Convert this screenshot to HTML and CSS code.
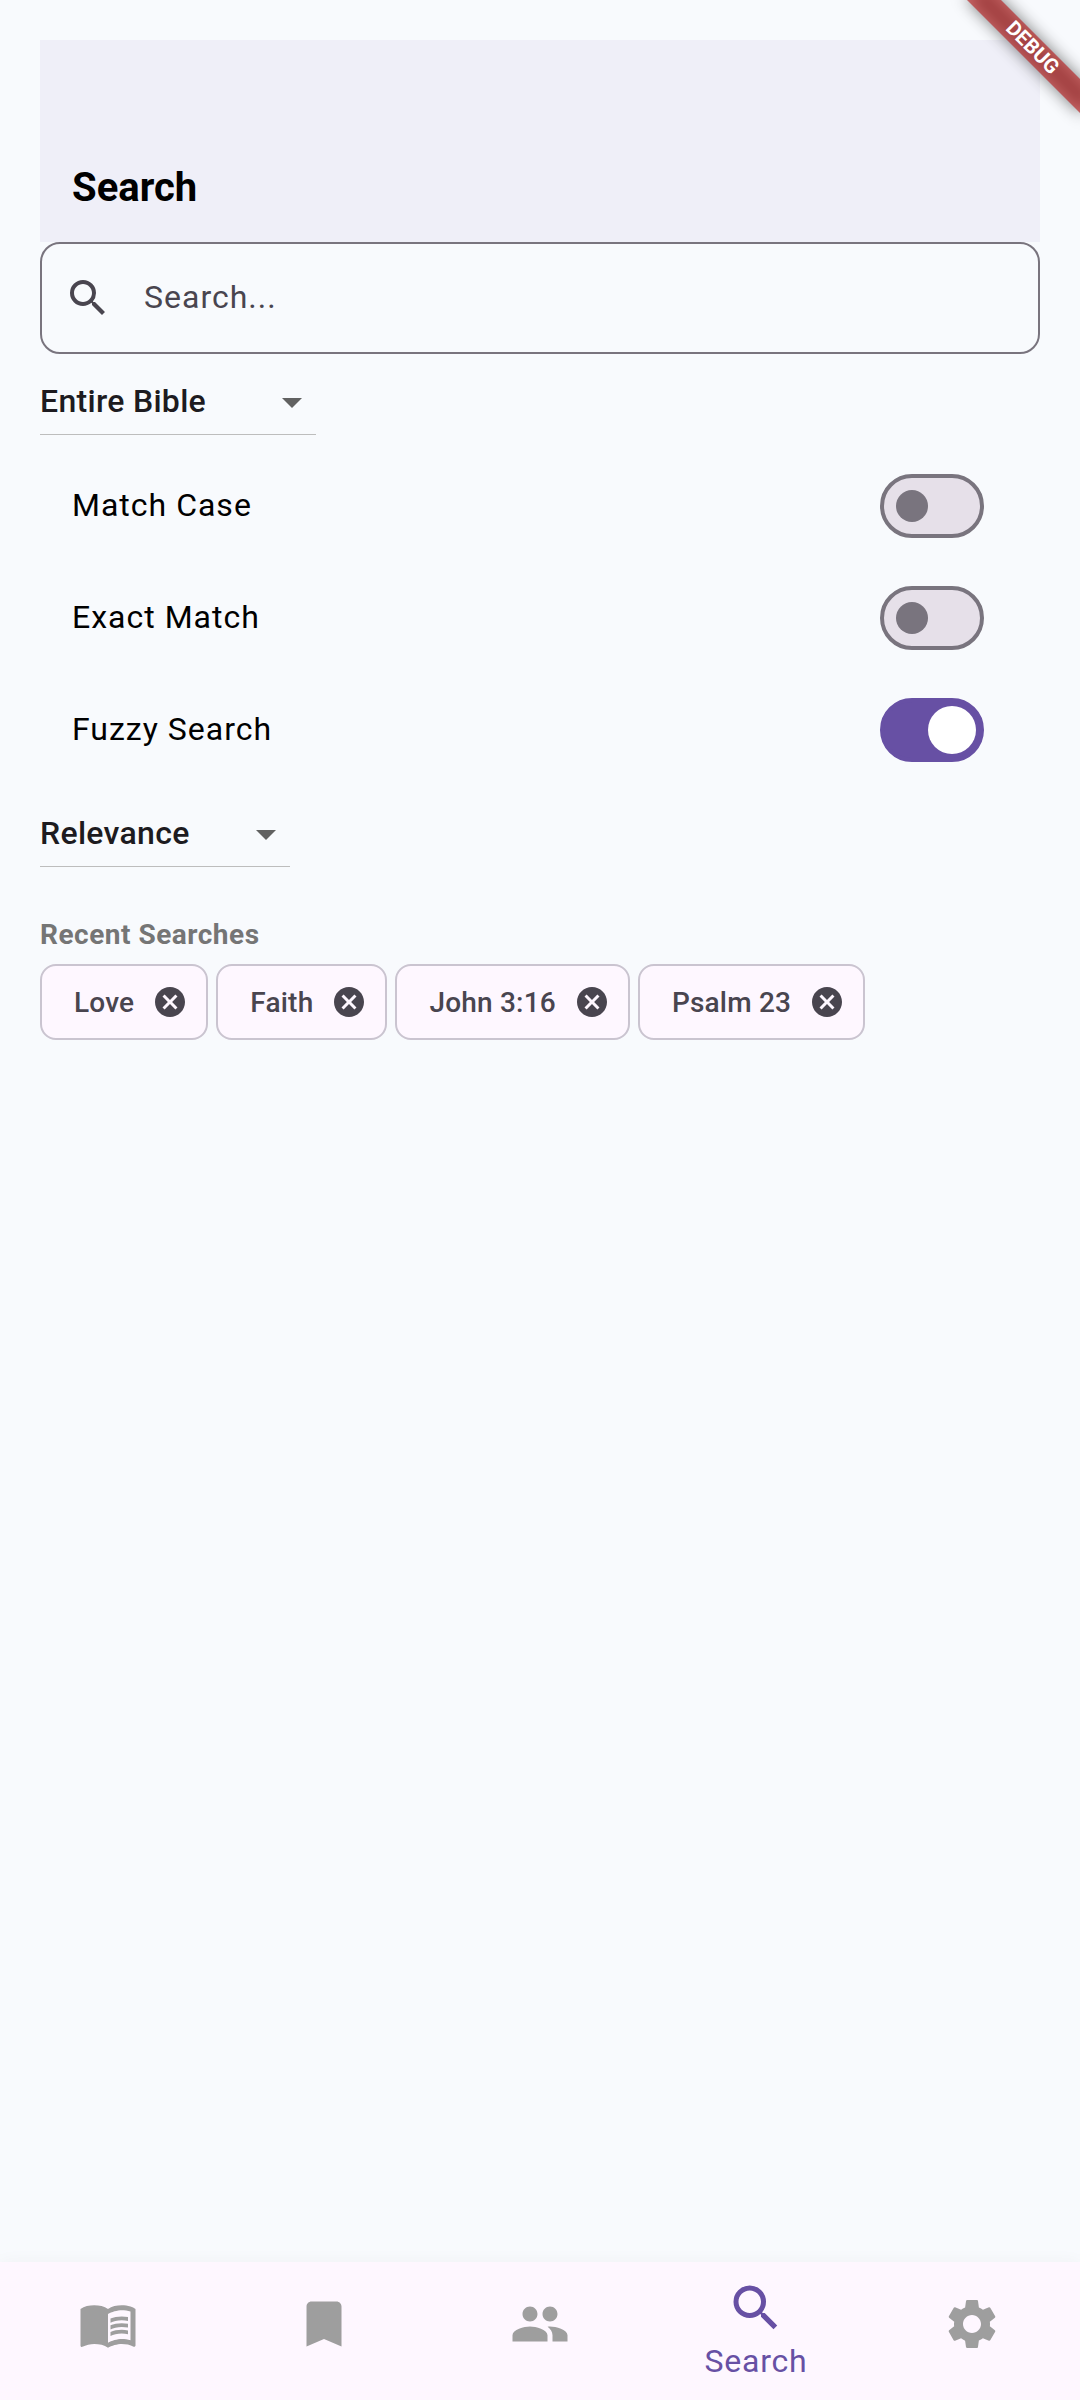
FILE: index.html
```
<!DOCTYPE html>
<html lang="en">
<head>
    <meta charset="UTF-8">
    <meta name="viewport" content="width=device-width, initial-scale=1.0">
    <title>Search</title>
    <link rel="stylesheet" href="styles.css">
</head>
<body>
    <div class="debug-corner">
        <div class="debug-banner"><span>DEBUG</span></div>
    </div>

    <main class="content">
        <header class="header">
            <h1>Search</h1>
        </header>

        <div class="search-field">
            <svg class="search-icon" viewBox="0 0 24 24"><path d="M15.5 14h-.79l-.28-.27A6.471 6.471 0 0 0 16 9.5 6.5 6.5 0 1 0 9.5 16c1.61 0 3.09-.59 4.23-1.57l.27.28v.79l5 4.99L20.49 19l-4.99-5zm-6 0C7.01 14 5 11.99 5 9.5S7.01 5 9.5 5 14 7.01 14 9.5 11.99 14 9.5 14z"/></svg>
            <span>Search...</span>
        </div>

        <div class="dropdown scope">
            <div class="dropdown-inner">
                <span>Entire Bible</span>
                <svg viewBox="0 0 24 24"><path d="M7 10l5 5 5-5z"/></svg>
            </div>
        </div>

        <div class="option">
            <span>Match Case</span>
            <div class="switch"><div class="thumb"></div></div>
        </div>
        <div class="option">
            <span>Exact Match</span>
            <div class="switch"><div class="thumb"></div></div>
        </div>
        <div class="option">
            <span>Fuzzy Search</span>
            <div class="switch on"><div class="thumb"></div></div>
        </div>

        <div class="dropdown sort">
            <div class="dropdown-inner">
                <span>Relevance</span>
                <svg viewBox="0 0 24 24"><path d="M7 10l5 5 5-5z"/></svg>
            </div>
        </div>

        <h2>Recent Searches</h2>
        <div class="chips">
            <div class="chip">
                <span>Love</span>
                <svg viewBox="0 0 24 24"><path d="M12 2C6.47 2 2 6.47 2 12s4.47 10 10 10 10-4.47 10-10S17.53 2 12 2zm5 13.59L15.59 17 12 13.41 8.41 17 7 15.59 10.59 12 7 8.41 8.41 7 12 10.59 15.59 7 17 8.41 13.41 12 17 15.59z"/></svg>
            </div>
            <div class="chip">
                <span>Faith</span>
                <svg viewBox="0 0 24 24"><path d="M12 2C6.47 2 2 6.47 2 12s4.47 10 10 10 10-4.47 10-10S17.53 2 12 2zm5 13.59L15.59 17 12 13.41 8.41 17 7 15.59 10.59 12 7 8.41 8.41 7 12 10.59 15.59 7 17 8.41 13.41 12 17 15.59z"/></svg>
            </div>
            <div class="chip">
                <span>John 3:16</span>
                <svg viewBox="0 0 24 24"><path d="M12 2C6.47 2 2 6.47 2 12s4.47 10 10 10 10-4.47 10-10S17.53 2 12 2zm5 13.59L15.59 17 12 13.41 8.41 17 7 15.59 10.59 12 7 8.41 8.41 7 12 10.59 15.59 7 17 8.41 13.41 12 17 15.59z"/></svg>
            </div>
            <div class="chip">
                <span>Psalm 23</span>
                <svg viewBox="0 0 24 24"><path d="M12 2C6.47 2 2 6.47 2 12s4.47 10 10 10 10-4.47 10-10S17.53 2 12 2zm5 13.59L15.59 17 12 13.41 8.41 17 7 15.59 10.59 12 7 8.41 8.41 7 12 10.59 15.59 7 17 8.41 13.41 12 17 15.59z"/></svg>
            </div>
        </div>
    </main>

    <nav class="bottom-nav">
        <a class="nav-item">
            <svg viewBox="0 0 24 24"><path d="M21 5c-1.11-.35-2.33-.5-3.5-.5-1.95 0-4.05.4-5.5 1.5-1.45-1.1-3.55-1.5-5.5-1.5S2.45 4.9 1 6v14.65c0 .25.25.5.5.5.1 0 .15-.05.25-.05C3.1 20.45 5.05 20 6.5 20c1.95 0 4.05.4 5.5 1.5 1.35-.85 3.8-1.5 5.5-1.5 1.65 0 3.35.3 4.75 1.05.1.05.15.05.25.05.25 0 .5-.25.5-.5V6c-.6-.45-1.25-.75-2-1zm0 13.5c-1.1-.35-2.3-.5-3.5-.5-1.7 0-4.15.65-5.5 1.5V8c1.35-.85 3.8-1.5 5.5-1.5 1.2 0 2.4.15 3.5.5v11.5z"/><path d="M17.5 10.5c.88 0 1.73.09 2.5.26V9.24c-.79-.15-1.64-.24-2.5-.24-1.7 0-3.24.29-4.5.83v1.66c1.13-.64 2.7-.99 4.5-.99zM13 12.49v1.66c1.13-.64 2.7-.99 4.5-.99.88 0 1.73.09 2.5.26V11.9c-.79-.15-1.64-.24-2.5-.24-1.7 0-3.24.3-4.5.83zM17.5 14.33c-1.7 0-3.24.29-4.5.83v1.66c1.13-.64 2.7-.99 4.5-.99.88 0 1.73.09 2.5.26v-1.52c-.79-.16-1.64-.24-2.5-.24z"/></svg>
        </a>
        <a class="nav-item">
            <svg viewBox="0 0 24 24"><path d="M17 3H7c-1.1 0-1.99.9-1.99 2L5 21l7-3 7 3V5c0-1.1-.9-2-2-2z"/></svg>
        </a>
        <a class="nav-item">
            <svg viewBox="0 0 24 24"><path d="M16 11c1.66 0 2.99-1.34 2.99-3S17.66 5 16 5s-3 1.34-3 3 1.34 3 3 3zm-8 0c1.66 0 2.99-1.34 2.99-3S9.66 5 8 5 5 6.34 5 8s1.34 3 3 3zm0 2c-2.33 0-7 1.17-7 3.5V19h14v-2.5c0-2.33-4.67-3.5-7-3.5zm8 0c-.29 0-.62.02-.97.05 1.16.84 1.97 1.97 1.97 3.45V19h6v-2.5c0-2.33-4.67-3.5-7-3.5z"/></svg>
        </a>
        <a class="nav-item active">
            <svg viewBox="0 0 24 24"><path d="M15.5 14h-.79l-.28-.27A6.471 6.471 0 0 0 16 9.5 6.5 6.5 0 1 0 9.5 16c1.61 0 3.09-.59 4.23-1.57l.27.28v.79l5 4.99L20.49 19l-4.99-5zm-6 0C7.01 14 5 11.99 5 9.5S7.01 5 9.5 5 14 7.01 14 9.5 11.99 14 9.5 14z"/></svg>
            <span>Search</span>
        </a>
        <a class="nav-item">
            <svg viewBox="0 0 24 24"><path d="M19.14 12.94c.04-.3.06-.61.06-.94 0-.32-.02-.64-.07-.94l2.03-1.58c.18-.14.23-.41.12-.61l-1.92-3.32c-.12-.22-.37-.29-.59-.22l-2.39.96c-.5-.38-1.03-.7-1.62-.94l-.36-2.54c-.04-.24-.24-.41-.48-.41h-3.84c-.24 0-.43.17-.47.41l-.36 2.54c-.59.24-1.13.57-1.62.94l-2.39-.96c-.22-.08-.47 0-.59.22L2.74 8.87c-.12.21-.08.47.12.61l2.03 1.58c-.05.3-.09.63-.09.94s.02.64.07.94l-2.03 1.58c-.18.14-.23.41-.12.61l1.92 3.32c.12.22.37.29.59.22l2.39-.96c.5.38 1.03.7 1.62.94l.36 2.54c.05.24.24.41.48.41h3.84c.24 0 .44-.17.47-.41l.36-2.54c.59-.24 1.13-.56 1.62-.94l2.39.96c.22.08.47 0 .59-.22l1.92-3.32c.12-.22.07-.47-.12-.61l-2.01-1.58zM12 15.6c-1.98 0-3.6-1.62-3.6-3.6s1.62-3.6 3.6-3.6 3.6 1.62 3.6 3.6-1.62 3.6-3.6 3.6z"/></svg>
        </a>
    </nav>
</body>
</html>
```
FILE: styles.css
```
* {
    box-sizing: border-box;
}
body {
    margin: 0;
    height: 2400px;
    display: flex;
    flex-direction: column;
    position: relative;
    overflow: hidden;
    background: #f8fafd;
    color: #000;
    font-family: Roboto, "Liberation Sans", sans-serif;
    font-size: 32px;
    letter-spacing: 1px;
}
svg {
    display: block;
    flex-shrink: 0;
    fill: currentColor;
}
.content {
    flex: 1;
    padding: 40px 40px 0;
}
.header {
    height: 202px;
    padding: 0 32px 31px;
    display: flex;
    align-items: flex-end;
    background: #efeff8;
}
h1 {
    margin: 0;
    font-size: 40px;
    line-height: 46px;
    font-weight: 700;
    letter-spacing: 0;
}
.search-field {
    height: 112px;
    padding: 0 22px;
    display: flex;
    align-items: center;
    gap: 32px;
    border: 2px solid #79747e;
    border-radius: 20px;
    color: #49454f;
}
.search-field span,
.dropdown span,
.option span {
    padding-bottom: 2px;
}
.search-icon {
    width: 48px;
    height: 48px;
}

/* Dropdowns */
.dropdown {
    height: 96px;
    padding: 15px 0;
}
.dropdown-inner {
    height: 66px;
    display: flex;
    align-items: center;
    justify-content: space-between;
    border-bottom: 1px solid #bdbdbd;
    color: #1d1b20;
    font-weight: 500;
    letter-spacing: 0.3px;
}
.dropdown svg {
    width: 48px;
    height: 48px;
    color: #616161;
}
.scope {
    width: 276px;
}
.sort {
    width: 250px;
}

/* Switch rows */
.option {
    height: 112px;
    padding: 0 56px 0 32px;
    display: flex;
    align-items: center;
    justify-content: space-between;
}
.switch {
    width: 104px;
    height: 64px;
    padding: 0 12px;
    display: flex;
    align-items: center;
    border: 4px solid #79747e;
    border-radius: 32px;
    background: #e6e0e9;
}
.thumb {
    width: 32px;
    height: 32px;
    border-radius: 50%;
    background: #79747e;
}
.switch.on {
    padding: 0 4px;
    justify-content: flex-end;
    border-color: #6750a4;
    background: #6750a4;
}
.on .thumb {
    width: 48px;
    height: 48px;
    background: #fff;
}

/* Recent searches */
h2 {
    margin: 33px 0 9px;
    font-size: 28px;
    line-height: 40px;
    font-weight: 700;
    letter-spacing: 0.5px;
    color: #757575;
}
.chips {
    display: flex;
    gap: 8px;
}
.chip {
    height: 76px;
    padding: 0 18px 0 32px;
    display: flex;
    align-items: center;
    gap: 18px;
    border: 2px solid #cac4d0;
    border-radius: 16px;
    background: #fef7ff;
    color: #49454f;
    font-size: 28px;
    font-weight: 500;
    letter-spacing: 0.2px;
}
.chip svg {
    width: 36px;
    height: 36px;
}

/* Bottom navigation */
.bottom-nav {
    height: 138px;
    display: flex;
    background: #fef7ff;
    box-shadow: 0 0 16px rgba(0, 0, 0, 0.04);
}
.nav-item {
    flex: 1;
    padding-top: 32px;
    display: flex;
    flex-direction: column;
    align-items: center;
    color: #9e9e9e;
}
.nav-item svg {
    width: 60px;
    height: 60px;
}
.nav-item.active {
    padding-top: 16px;
    color: #6750a4;
}
.nav-item span {
    line-height: 47px;
    letter-spacing: 0.8px;
}

/* Debug ribbon */
.debug-corner {
    position: absolute;
    top: 0;
    right: 0;
    width: 180px;
    height: 180px;
    overflow: hidden;
}
.debug-banner {
    position: absolute;
    top: 36px;
    right: -32px;
    width: 160px;
    height: 24px;
    transform: rotate(45deg);
    color: #fff;
    font-size: 20.4px;
    font-weight: 700;
    line-height: 22px;
    letter-spacing: 0;
    text-align: center;
}
.debug-banner::before {
    content: "";
    position: absolute;
    inset: 0;
    background: rgba(0, 0, 0, 0.5);
    filter: blur(8px);
}
.debug-banner span {
    position: absolute;
    inset: 0;
    background: rgba(183, 28, 28, 0.63);
}
```
